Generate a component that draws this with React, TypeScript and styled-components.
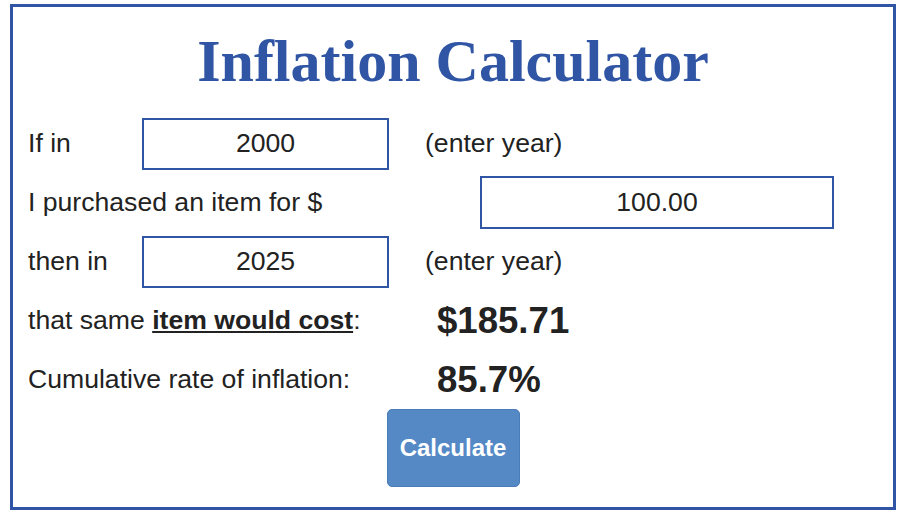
import styled, { createGlobalStyle } from "styled-components"

const GlobalStyle = createGlobalStyle`
  body {
    margin: 0;
    background: #ffffff;
    font-family: "Liberation Sans", Arial, sans-serif;
    color: #222222;
  }
`

const blue = "#2f55a4"

const Frame = styled.div`
  box-sizing: border-box;
  width: 886px;
  height: 506px;
  margin: 4px 0 0 10px;
  border: 3px solid ${blue};
  display: flex;
  flex-direction: column;
`

const Title = styled.h1`
  margin: 24px 0 0;
  font-family: "Liberation Serif", "Times New Roman", serif;
  font-size: 60px;
  line-height: 60px;
  font-weight: bold;
  color: ${blue};
  text-align: center;
`

const Form = styled.div`
  display: grid;
  grid-template-columns: 114px 283px 1fr;
  grid-auto-rows: 59px;
  align-items: center;
  margin-top: 23px;
  padding-left: 15px;
`

const Label = styled.div<{ $span?: boolean }>`
  font-size: 26.6px;
  grid-column: ${(p) => (p.$span ? "1 / 3" : "auto")};
  white-space: nowrap;
`

const Hint = styled.div`
  font-size: 26.6px;
`

const Field = styled.input<{ $wide?: boolean }>`
  box-sizing: border-box;
  width: ${(p) => (p.$wide ? "354px" : "247px")};
  height: ${(p) => (p.$wide ? "53px" : "52px")};
  margin-left: ${(p) => (p.$wide ? "55px" : "0")};
  border: 2px solid ${blue};
  border-radius: 0;
  padding: 0;
  font-family: "Liberation Sans", Arial, sans-serif;
  font-size: 26.6px;
  color: #222222;
  text-align: center;
  outline: none;
`

const Emph = styled.span`
  font-weight: bold;
  text-decoration: underline;
`

const Result = styled.div`
  padding-left: 12px;
  font-size: 36.6px;
  font-weight: bold;
  color: #222222;
`

const Actions = styled.div`
  display: flex;
  justify-content: center;
`

const CalcButton = styled.button`
  box-sizing: border-box;
  width: 133px;
  height: 78px;
  background: #5589c6;
  border: 1px solid #4a7cb8;
  border-radius: 5px;
  color: #ffffff;
  font-family: "Liberation Sans", Arial, sans-serif;
  font-size: 24px;
  font-weight: bold;
  cursor: pointer;
`

export default function App() {
  return (
    <>
      <GlobalStyle />
      <Frame>
        <Title>Inflation Calculator</Title>
        <Form>
          <Label>If in</Label>
          <Field defaultValue="2000" />
          <Hint>(enter year)</Hint>

          <Label $span>I purchased an item for $</Label>
          <Field $wide defaultValue="100.00" />

          <Label>then in</Label>
          <Field defaultValue="2025" />
          <Hint>(enter year)</Hint>

          <Label $span>
            that same <Emph>item would cost</Emph>:
          </Label>
          <Result>$185.71</Result>

          <Label $span>Cumulative rate of inflation:</Label>
          <Result>85.7%</Result>
        </Form>
        <Actions>
          <CalcButton type="button">Calculate</CalcButton>
        </Actions>
      </Frame>
    </>
  )
}
